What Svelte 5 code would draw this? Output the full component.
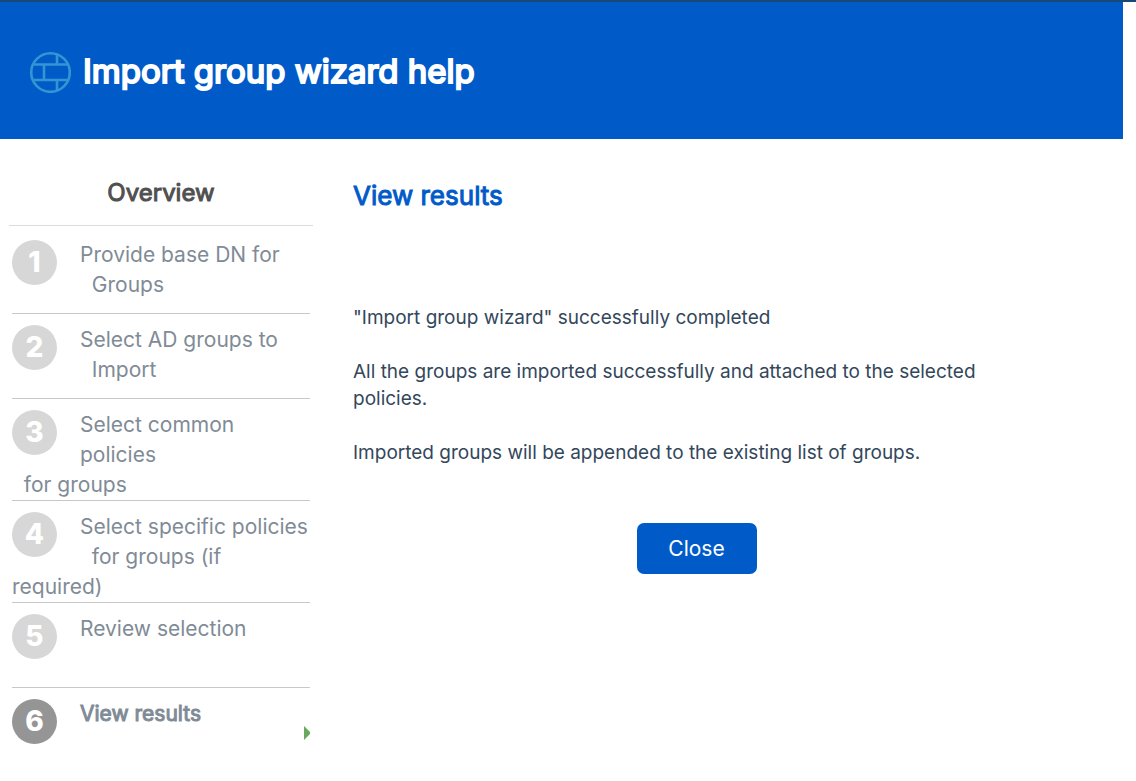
<script>
  const steps = [
    { lines: ['Provide base DN for', '\u00a0\u00a0Groups'] },
    { lines: ['Select AD groups to', '\u00a0\u00a0Import'] },
    { lines: ['Select common', 'policies', '\u00a0\u00a0for groups'] },
    { lines: ['Select specific policies', '\u00a0\u00a0for groups (if', 'required)'] },
    { lines: ['Review selection'] },
    { lines: ['View results'], current: true }
  ];
</script>

<div class="page">
  <header>
    <svg class="globe" viewBox="0 0 42 42" aria-hidden="true">
      <circle cx="21.5" cy="21.5" r="19.3" />
      <path d="M5 13.5H38M5 29H38M15 13.5V29M28 4V13.5M28 29V39" />
    </svg>
    <h1>Import group wizard help</h1>
  </header>

  <div class="body">
    <nav aria-labelledby="overview">
      <h2 id="overview">Overview</h2>
      <ol>
        {#each steps as step, i}
          <li class:current={step.current} aria-current={step.current ? 'step' : undefined}>
            <span class="number">{i + 1}</span>
            {#each step.lines as line, n}{#if n}<br />{/if}{line}{/each}
            {#if step.current}
              <svg class="arrow" viewBox="0 0 6 14" aria-hidden="true"><path d="M0 0L6 6V8L0 14Z" /></svg>
            {/if}
          </li>
        {/each}
      </ol>
    </nav>

    <main>
      <h2>View results</h2>
      <div class="message">
        <p>"Import group wizard" successfully completed</p>
        <p>All the groups are imported successfully and attached to the selected policies.</p>
        <p>Imported groups will be appended to the existing list of groups.</p>
      </div>
      <button type="button">Close</button>
    </main>
  </div>
</div>

<style>
  :global(body) {
    margin: 0;
    background: #fff;
  }
  .page {
    border-top: 2px solid #174976;
    font-family: Inter, "Liberation Sans", sans-serif;
    color: #33475b;
  }
  header {
    display: flex;
    align-items: center;
    gap: 12px;
    box-sizing: border-box;
    min-height: 137px;
    margin-right: 13px;
    padding: 2px 29px 0;
    background: #005bc9;
    color: #fff;
  }
  .globe {
    width: 42px;
    height: 42px;
    fill: none;
    stroke: #3296d2;
    stroke-width: 2.6;
  }
  h1,
  h2,
  .current {
    font-weight: 400;
    -webkit-text-stroke: 1px currentColor;
  }
  h1 {
    margin: 0;
    padding-bottom: 2px;
    font-size: 33px;
    line-height: 40px;
    -webkit-text-stroke-width: 2px;
  }
  .body {
    display: grid;
    grid-template-columns: 304px minmax(0, 1fr);
    column-gap: 40px;
    padding: 0 96px 0 9px;
  }
  nav h2 {
    margin: 0;
    padding: 38px 0 16px;
    border-bottom: 1px solid #dcdcdc;
    color: #505050;
    font-size: 24px;
    line-height: 32px;
    text-align: center;
  }
  ol {
    margin: 3px 3px 0;
    padding: 0;
    list-style: none;
  }
  li {
    position: relative;
    box-sizing: border-box;
    min-height: 85px;
    padding-top: 11px;
    border-bottom: 1px solid #c8c8c8;
    color: #7f8b96;
    font-size: 21px;
    line-height: 30px;
    white-space: nowrap;
  }
  li:last-child {
    border-bottom: 0;
  }
  .number {
    float: left;
    width: 45px;
    height: 45px;
    margin-right: 23px;
    border-radius: 50%;
    background: #d7d7d7;
    color: #fff;
    font-size: 28px;
    line-height: 45px;
    font-weight: 800;
    text-align: center;
    -webkit-text-stroke: 0;
  }
  .current .number {
    background: #959595;
  }
  .arrow {
    position: absolute;
    right: 0;
    top: 38px;
    width: 6px;
    height: 14px;
    fill: #69a85f;
  }
  main {
    display: flex;
    flex-direction: column;
    align-items: flex-start;
    padding-top: 41px;
  }
  main h2 {
    margin: 0;
    color: #005bc9;
    font-size: 26px;
    line-height: 32px;
  }
  .message {
    display: grid;
    gap: 27px;
    max-width: 690px;
    margin-top: 92px;
    font-size: 19px;
    line-height: 27px;
  }
  p {
    margin: 0;
  }
  button {
    align-self: center;
    min-width: 120px;
    margin-top: 57px;
    padding: 12px 30px;
    border: 0;
    border-radius: 7px;
    background: #005bc9;
    color: #fff;
    font: inherit;
    font-size: 21px;
    line-height: 27px;
  }
</style>
